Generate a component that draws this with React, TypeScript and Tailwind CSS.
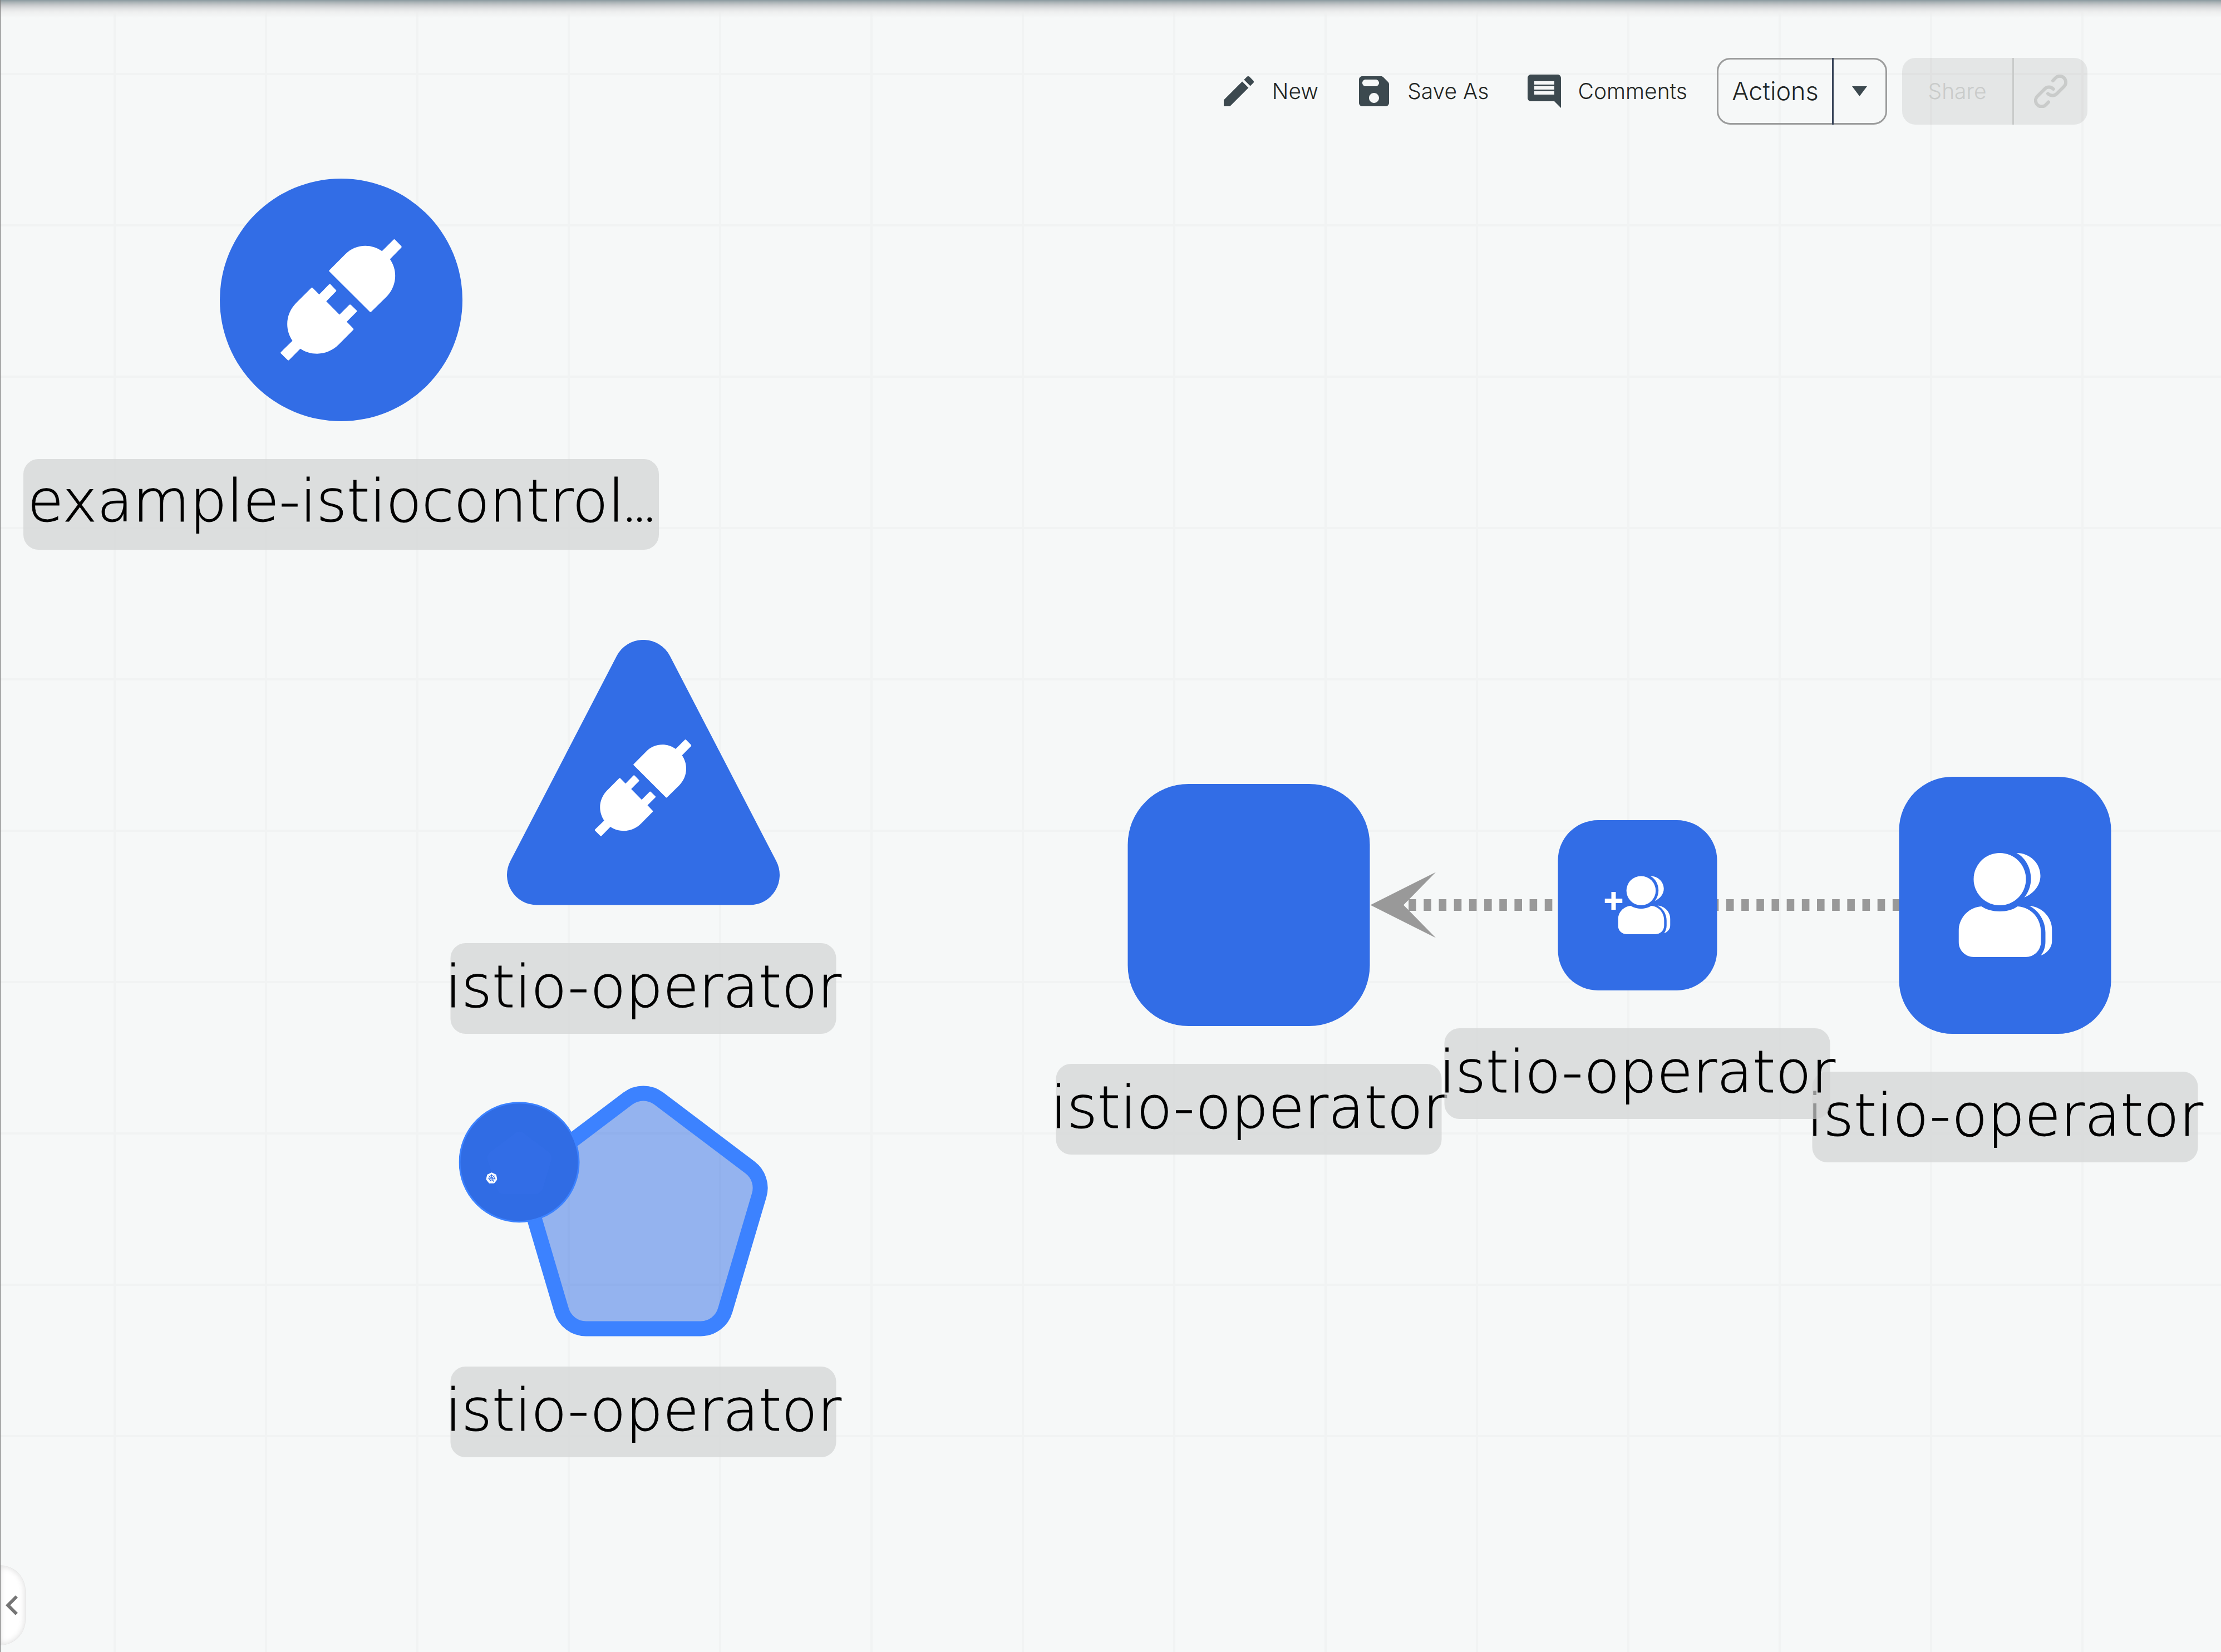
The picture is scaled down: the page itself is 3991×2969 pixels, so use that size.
import type { ReactNode } from "react";
import { SiKubernetes } from "react-icons/si";

const ICONS = {
  edit: "M3 17.46v3.04c0 .28.22.5.5.5h3.04c.13 0 .26-.05.35-.15L17.81 9.94l-3.75-3.75L3.15 17.1c-.1.1-.15.22-.15.36zM20.71 7.04c.39-.39.39-1.02 0-1.41l-2.34-2.34c-.39-.39-1.02-.39-1.41 0l-1.83 1.83 3.75 3.75 1.83-1.83z",
  save: "M17.59 3.59c-.38-.38-.89-.59-1.42-.59H5c-1.11 0-2 .9-2 2v14c0 1.1.9 2 2 2h14c1.1 0 2-.9 2-2V7.83c0-.53-.21-1.04-.59-1.41l-2.82-2.83zM12 19c-1.66 0-3-1.34-3-3s1.34-3 3-3 3 1.34 3 3-1.34 3-3 3zm1-10H7c-1.1 0-2-.9-2-2s.9-2 2-2h6c1.1 0 2 .9 2 2s-.9 2-2 2z",
  comment:
    "M21.99 4c0-1.1-.89-2-1.99-2H4c-1.1 0-2 .9-2 2v12c0 1.1.9 2 2 2h14l4 4-.01-18zM18 14H6v-2h12v2zm0-3H6V9h12v2zm0-3H6V6h12v2z",
};

function ToolButton({ icon, children }: { icon: keyof typeof ICONS; children: ReactNode }) {
  return (
    <button type="button" className="flex items-center gap-6 text-[39px] leading-[48px] font-light text-[#222625]">
      <svg viewBox="0 0 24 24" className="size-[72px] fill-[#3c494f]" aria-hidden="true">
        <path d={ICONS[icon]} />
      </svg>
      {children}
    </button>
  );
}

function Toolbar() {
  return (
    <header className="relative flex items-center justify-end pt-[104px] pr-[240px]">
      <div className="flex items-center gap-16">
        <ToolButton icon="edit">New</ToolButton>
        <ToolButton icon="save">Save As</ToolButton>
        <ToolButton icon="comment">Comments</ToolButton>
      </div>
      <div className="ml-[53px] flex h-[120px] rounded-[24px] border-3 border-[#9b9c9c]">
        <button type="button" className="-my-[3px] w-[207px] border-r-3 border-[#3a465a] text-[45px] font-light text-[#222625]">
          Actions
        </button>
        <button type="button" aria-label="More actions" className="flex w-[93px] items-center justify-center">
          <svg viewBox="0 0 27 18" className="h-[18px] w-[27px] fill-[#3c494f]" aria-hidden="true">
            <path d="M0 0H27L13.500 18z" />
          </svg>
        </button>
      </div>
      <div className="ml-[27px] flex h-[120px] rounded-[24px] bg-black/7 text-[#c9cbca]">
        <button type="button" disabled className="w-[201px] border-r-3 border-[#c9cbca] text-[39px] font-light">
          Share
        </button>
        <button type="button" disabled aria-label="Copy link" className="flex w-[132px] items-center justify-center">
          <svg
            viewBox="165 71 180 180"
            className="size-[60px] fill-none stroke-current stroke-18"
            strokeLinecap="round"
            aria-hidden="true"
          >
            <path d="M267 104L281 89A32 32 0 0 1 327 135L287 175C275 187 254 187 240 174" />
            <path d="M243 219L229 234A32 32 0 0 1 183 188L224 147C236 136 256 135 269 149" />
          </svg>
        </button>
      </div>
    </header>
  );
}

function PlugIcon({ className }: { className: string }) {
  return (
    <svg viewBox="372 391 652 653" className={className} aria-hidden="true">
      <path
        fill="#fff"
        d="M635 557L720 472C750 441 788 426 828 426C860 426 892 436 918 455L980 393Q984 389 988 393L1022 428Q1025 432 1022 436L961 498C979 525 989 555 989 587C989 630 972 670 941 702L860 781Q856 785 852 781L635 565Q631 561 635 557Z"
      />
      <path
        fill="#fff"
        d="M537 653Q541 649 545 653L580 688L633 634Q637 630 641 634L670 664Q674 668 670 672L618 725L689 797L742 744Q746 740 750 744L781 774Q785 778 781 782L728 835L763 871Q767 875 763 879L687 956C654 990 612 1007 569 1007C537 1007 505 998 478 980L418 1041Q414 1045 410 1041L374 1006Q370 1002 374 998L436 938C418 911 408 880 408 848C408 806 424 768 455 735Z"
      />
    </svg>
  );
}

function UsersIcon({ className }: { className: string }) {
  return (
    <svg viewBox="0 0 168 188" className={className} aria-hidden="true">
      <g fill="#fff">
        <circle cx="74" cy="47" r="47" />
        <path d="M104 0C128 0 147 18 147 41C147 58 135 73 118 80C126 70 130 58 130 46C130 27 120 8 104 0Z" />
        <path d="M41 96C50 102 62 105 74 105C86 105 98 102 106 96C131 98 148 117 148 143V159C148 175 136 187 120 187H28C12 187 0 175 0 159V141C0 117 17 98 41 96Z" />
        <path d="M127 95C151 97 168 116 168 139V157C168 169 160 180 148 184C153 177 156 169 156 159V143C156 123 145 104 127 95Z" />
      </g>
    </svg>
  );
}

function Node({
  className,
  wide = false,
  label,
  children,
}: {
  className: string;
  wide?: boolean;
  label: ReactNode;
  children: ReactNode;
}) {
  return (
    <div className={`absolute flex -translate-x-1/2 flex-col items-center gap-[68px] ${className}`}>
      {children}
      <div
        className={`flex h-[163px] items-center justify-center rounded-[27px] bg-[#d2d3d3]/70 pb-[6px] text-[105px] leading-[120px] font-extralight whitespace-nowrap text-black [-webkit-text-stroke:1px_black] ${
          wide ? "w-[1142px]" : "w-[693px]"
        }`}
        style={{ fontFamily: '"DejaVu Sans", sans-serif' }}
      >
        <span>{label}</span>
      </div>
    </div>
  );
}

function Edge() {
  return (
    <svg viewBox="2461 1560 960 134" className="absolute top-[1560px] left-[2461px] h-[134px] w-[960px]" aria-hidden="true">
      <path d="M3413.500 1626.500H2523" stroke="#999" strokeWidth="21" strokeDasharray="13.600 13.580" fill="none" />
      <path d="M2461.500 1626.500L2579 1567.500L2521 1626.500L2579 1685.500Z" fill="#999" />
    </svg>
  );
}

export default function App() {
  return (
    <main
      className="relative min-h-screen overflow-hidden border-l border-[#7a7a7a] bg-[#f6f8f8]"
      style={{ fontFamily: "Inter, sans-serif" }}
    >
      <div className="absolute inset-0 bg-[linear-gradient(to_right,#f1f3f3_4px,transparent_4px)] bg-size-[272px_272px] bg-position-[203px_0px]" />
      <div className="absolute inset-x-0 top-0 bottom-[130px] bg-[linear-gradient(to_bottom,#f1f3f3_4px,transparent_4px)] bg-size-[272px_272px] bg-position-[0px_131px]" />
      <div className="absolute inset-x-0 top-0 h-[32px] bg-[linear-gradient(to_bottom,#8a999f_0px,#a9b2b5_4px,#c6c9cb_9px,#dedfe0_15px,#edeeee_21px,#f6f8f800_32px)]" />

      <Toolbar />

      <section aria-label="Design canvas" className="absolute inset-0">
        <Edge />

        <Node
          className="top-[321px] left-[612px]"
          wide
          label={
            <>
              example-istiocontrol
              <span className="text-[78px]" style={{ fontFamily: "Lato, sans-serif", fontWeight: 300 }}>
                ...
              </span>
            </>
          }
        >
          <div className="flex size-[436px] items-center justify-center rounded-full bg-[#326de6]">
            <PlugIcon className="size-[218px]" />
          </div>
        </Node>

        <Node className="top-[1150px] left-[1155px]" label="istio-operator">
          <div className="relative">
            <svg viewBox="911 1150 491 477" className="h-[477px] w-[491px]" aria-hidden="true">
              <path
                fill="#326de6"
                d="M1108.600 1179A54 54 0 0 1 1204.400 1179L1395.400 1547.600A54 54 0 0 1 1347.500 1626.600H965.500A54 54 0 0 1 917.600 1547.600Z"
              />
            </svg>
            <PlugIcon className="absolute top-[179px] left-[158px] h-[174px] w-[174px]" />
          </div>
        </Node>

        <Node className="top-[1951px] left-[1155px]" label="istio-operator">
          <div className="relative -mb-[14px]">
            <svg viewBox="825 1951 663 451" className="h-[451px] w-[663px]" aria-hidden="true">
              <path
                fill="#326de680"
                stroke="none"
                d="M1128.700 1974.300A46 46 0 0 1 1184.300 1974.300L1348.400 2098.300A46 46 0 0 1 1364.700 2148L1303.600 2354.800A46 46 0 0 1 1259.500 2388H1053.500A46 46 0 0 1 1009.400 2354.800L948.300 2148A46 46 0 0 1 964.600 2098.300Z"
              />
              <path
                fill="none"
                stroke="#3c82ff"
                strokeWidth="27"
                d="M1128.700 1974.300A46 46 0 0 1 1184.300 1974.300L1348.400 2098.300A46 46 0 0 1 1364.700 2148L1303.600 2354.800A46 46 0 0 1 1259.500 2388H1053.500A46 46 0 0 1 1009.400 2354.800L948.300 2148A46 46 0 0 1 964.600 2098.300Z"
              />
              <circle cx="933.500" cy="2088.700" r="107" fill="#306ce4" stroke="#3c82ff" strokeWidth="3" />
              <path
                fill="#326de6"
                d="M927 2036Q934 2031 941 2036L986 2070Q994 2076 991 2086L976 2136Q972 2146 962 2146H906Q896 2146 893 2136L877 2086Q874 2076 882 2070Z"
              />
            </svg>
            <SiKubernetes className="absolute top-[156px] left-[49px] size-[20px] text-white" aria-hidden="true" />
          </div>
        </Node>

        <Node className="top-[1409px] left-[2243px]" label="istio-operator">
          <div className="size-[435px] rounded-[109px] bg-[#326de6]" />
        </Node>

        <Node className="top-[1396px] left-[3602px]" label="istio-operator">
          <div className="flex h-[462px] w-[381px] items-center justify-center rounded-[96px] bg-[#326de6]">
            <UsersIcon className="h-[188px] w-[168px]" />
          </div>
        </Node>

        <Node className="top-[1474px] left-[2941px]" label="istio-operator">
          <div className="relative h-[306px] w-[286px] rounded-[72px] bg-[#326de6]">
            <UsersIcon className="absolute top-[100px] left-[108px] h-[106px] w-[94px]" />
            <svg viewBox="0 0 32 32" className="absolute top-[129px] left-[84px] size-[32px] fill-white" aria-hidden="true">
              <path d="M12 0H20V12H32V20H20V32H12V20H0V12H12Z" />
            </svg>
          </div>
        </Node>
      </section>

      <button
        type="button"
        aria-label="Collapse panel"
        className="absolute bottom-3 -left-px flex h-36 w-[46px] items-center rounded-r-full border border-l-0 border-[#e6e6e6] bg-white inset-shadow-[0_0_12px_#00000024]"
      >
        <svg viewBox="8 6 7.410 12" className="ml-[10px] h-[36px] w-[22px] fill-[#757575]" aria-hidden="true">
          <path d="M15.410 7.410 14 6l-6 6 6 6 1.410-1.410L10.830 12z" />
        </svg>
      </button>
    </main>
  );
}
